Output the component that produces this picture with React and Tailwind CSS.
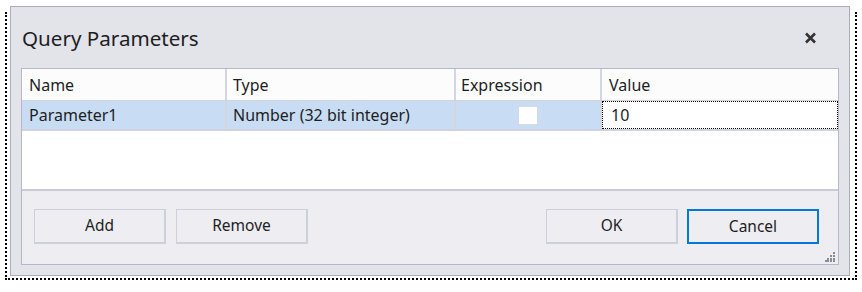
import React from "react";

const font = { fontFamily: '"Noto Sans", "Open Sans", sans-serif' };

function Btn({ children, primary }) {
  return (
    <div
      className={
        "w-[132px] h-[35px] flex items-center justify-center text-[15.5px] text-[#1e1e1e] bg-[#ededf2] " +
        (primary
          ? "border-2 border-[#0078d7]"
          : "border-t border-l border-r-2 border-b-2 border-[#cdcfdb]")
      }
    >
      {children}
    </div>
  );
}

export default function App() {
  return (
    <div className="w-[862px] h-[292px] bg-white relative" style={font}>
      <div className="absolute left-[5px] top-[12px] w-[852px] h-[268px] border-l-2 border-r-2 border-b-2 border-dotted border-black pointer-events-none" />
      <div className="relative ml-[10px] pt-[6px]">
        <div className="w-[840px] h-[270px] border border-[#a9aac1] bg-[#e3e3ea] flex flex-col">
          <div className="h-[61px] flex items-start justify-between pl-[11px] pr-[32px]">
            <div className="mt-[17px] text-[20.6px] leading-[28px] text-[#1e1e1e]">Query Parameters</div>
            <svg className="mt-[25px]" width="13" height="12" viewBox="0 0 13 12">
              <path d="M2 1.5 L11 10.5 M11 1.5 L2 10.5" stroke="#333" strokeWidth="2.6" />
            </svg>
          </div>
          <div className="mx-[10px] h-[197px] border border-[#b5b7ca] flex flex-col">
            <div className="h-[120px] bg-white text-[16px] text-[#1e1e1e]">
              <div className="flex h-[32px] bg-[#fcfcfd] border-b border-[#d0d3de]">
                <div className="w-[205px] border-r-2 border-[#d3d6e0] pl-[7px] flex items-center">Name</div>
                <div className="w-[229px] border-r-2 border-[#d3d6e0] pl-[6px] flex items-center">Type</div>
                <div className="w-[146px] border-r-2 border-[#d3d6e0] pl-[5px] flex items-center">Expression</div>
                <div className="flex-1 pl-[7px] flex items-center">Value</div>
              </div>
              <div className="flex h-[30px] bg-[#c8ddf3] border-b-2 border-[#d0d3de]">
                <div className="w-[205px] border-r-2 border-[#d3d6e0] pl-[7px] flex items-center">Parameter1</div>
                <div className="w-[229px] border-r-2 border-[#d3d6e0] pl-[6px] flex items-center">Number (32 bit integer)</div>
                <div className="w-[146px] border-r-2 border-[#d3d6e0] flex items-center justify-center">
                  <div className="w-[20px] h-[19px] bg-white border border-[#d4d8e4]" />
                </div>
                <div className="flex-1 bg-white border border-dotted border-black pl-[8px] flex items-center">10</div>
              </div>
            </div>
            <div className="flex-1 border-t-2 border-[#c9cbd8] bg-[#ededf2] relative flex items-start justify-between pl-[12px] pr-[19px] pt-[18px]">
              <div className="flex gap-[10px]">
                <Btn>Add</Btn>
                <Btn>Remove</Btn>
              </div>
              <div className="flex gap-[9px]">
                <Btn>OK</Btn>
                <Btn primary>Cancel</Btn>
              </div>
              <svg className="absolute right-[3px] bottom-[2px]" width="10" height="10" viewBox="0 0 10 10">
                <g fill="#8a8b97">
                  <rect x="8" y="0" width="2" height="2" />
                  <rect x="5" y="3" width="2" height="2" />
                  <rect x="8" y="3" width="2" height="2" />
                  <rect x="2" y="6" width="2" height="2" />
                  <rect x="5" y="6" width="2" height="2" />
                  <rect x="8" y="6" width="2" height="2" />
                  <rect x="0" y="8" width="2" height="2" />
                  <rect x="2" y="8" width="2" height="2" />
                  <rect x="5" y="8" width="2" height="2" />
                  <rect x="8" y="8" width="2" height="2" />
                </g>
              </svg>
            </div>
          </div>
        </div>
      </div>
    </div>
  );
}
